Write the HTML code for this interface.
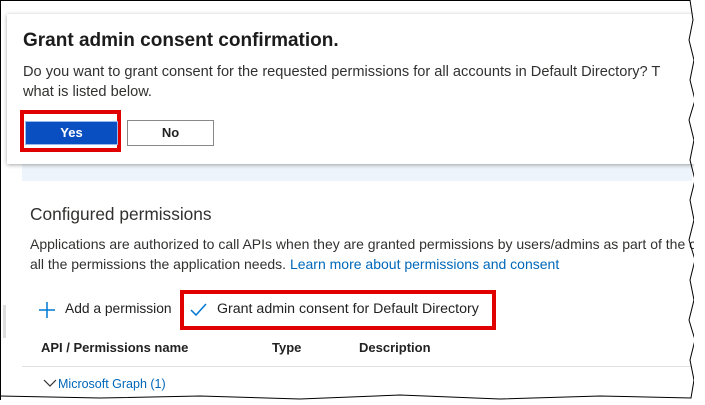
<!DOCTYPE html><html><head><style>
body{margin:0;width:705px;height:405px;background:#fff;position:relative;overflow:hidden;font-family:"Liberation Sans",sans-serif;color:#222}
.a{position:absolute;white-space:nowrap}
</style></head><body>
<div class="a" style="left:0;top:0;width:1px;height:405px;background:#000"></div>
<div class="a" style="left:0;top:0;width:690px;height:1px;background:#000"></div>
<div class="a" style="left:22px;top:150px;width:670px;height:31px;background:#eef4fc"></div>
<div class="a" style="left:7px;top:14px;width:688px;height:150px;background:#fff;box-shadow:0 1px 4px rgba(0,0,0,.35)"></div>
<div class="a" style="left:23px;top:30px;font-size:19px;font-weight:bold;color:#1b1b1b">Grant admin consent confirmation.</div>
<div class="a" style="left:23px;top:64px;font-size:14.6px;color:#323130">Do you want to grant consent for the requested permissions for all accounts in Default Directory? T</div>
<div class="a" style="left:23px;top:84px;font-size:14.6px;color:#323130">what is listed below.</div>
<div class="a" style="left:20px;top:110px;width:93px;height:34px;border:4px solid #e00000"></div>
<div class="a" style="left:25px;top:121px;width:93px;height:24px;background:#0a4fc2;border:1px solid #9bb8ea;box-sizing:border-box;color:#fff;font-size:13px;font-weight:bold;text-align:center;line-height:22px">Yes</div>
<div class="a" style="left:127px;top:120px;width:87px;height:26px;border:1px solid #8a8886;box-sizing:border-box;font-size:13px;font-weight:bold;text-align:center;line-height:24px">No</div>
<div class="a" style="left:30px;top:204px;font-size:17.3px;color:#323130">Configured permissions</div>
<div class="a" style="left:30px;top:236px;font-size:14px;color:#323130">Applications are authorized to call APIs when they are granted permissions by users/admins as part of the c</div>
<div class="a" style="left:30px;top:256px;font-size:14px;color:#323130">all the permissions the application needs. <span style="color:#0067b8">Learn more about permissions and consent</span></div>
<div class="a" style="left:3px;top:305px;width:3px;height:33px;background:#ddd"></div>
<svg class="a" style="left:38px;top:301px" width="18" height="18"><path d="M9 1V17M1 9H17" stroke="#0078d4" stroke-width="1.5"/></svg>
<div class="a" style="left:65px;top:301px;font-size:13.8px">Add a permission</div>
<div class="a" style="left:180px;top:290px;width:308px;height:32px;border:4px solid #e00000"></div>
<svg class="a" style="left:190px;top:302px" width="18" height="16"><path d="M1 8L6 13L16 2" stroke="#0078d4" stroke-width="1.5" fill="none"/></svg>
<div class="a" style="left:217px;top:301px;font-size:14.2px">Grant admin consent for Default Directory</div>
<div class="a" style="left:41px;top:340px;font-size:13px;font-weight:bold">API / Permissions name</div>
<div class="a" style="left:272px;top:340px;font-size:13px;font-weight:bold">Type</div>
<div class="a" style="left:359px;top:340px;font-size:13px;font-weight:bold">Description</div>
<div class="a" style="left:22px;top:366px;width:670px;height:1px;background:#e1dfdd"></div>
<svg class="a" style="left:43px;top:379px" width="14" height="9"><path d="M1 1L7 7L13 1" stroke="#333" stroke-width="1.2" fill="none"/></svg>
<div class="a" style="left:58px;top:377px;font-size:12.5px;color:#0067b8">Microsoft Graph (1)</div>
<svg class="a" style="left:0;top:0" width="705" height="405"><path d="M690 0 L693 20 L689 40 L694 60 L690 80 L695 100 L689 120 L694 140 L690 160 L695 180 L690 200 L694 220 L689 240 L695 260 L690 280 L694 300 L689 320 L695 340 L690 360 L694 380 L691 398 L600 396 L500 399 L400 395 L300 399 L200 396 L100 398 L0 396" stroke="#000" fill="none" stroke-width="1"/><path d="M694 2V400H0V405H705V0Z" fill="#fff"/></svg>
</body></html>
